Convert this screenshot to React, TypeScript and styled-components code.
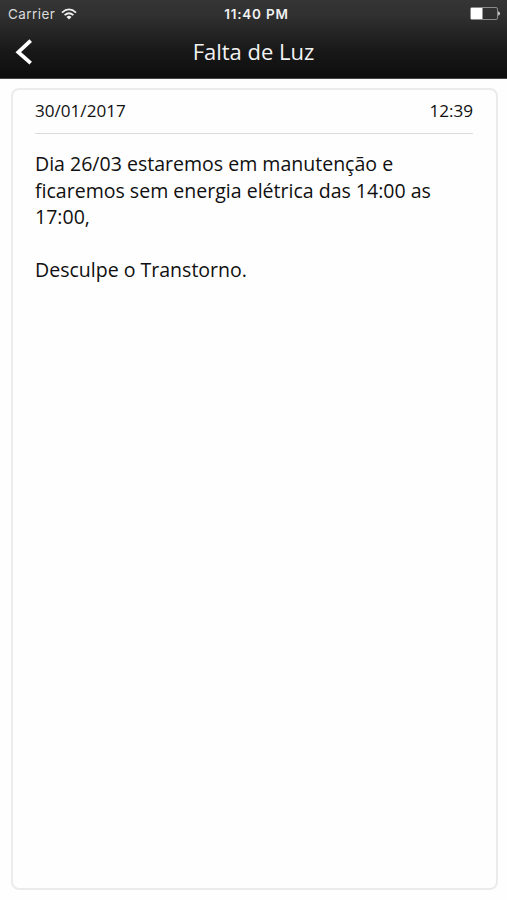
import React from "react";
import styled, { createGlobalStyle } from "styled-components";

const GlobalStyle = createGlobalStyle`
  * { box-sizing: border-box; }
  body { margin: 0; background: #fefefe; font-family: "Open Sans", "Noto Sans", sans-serif; }
`;

const Screen = styled.main`
  height: 900px;
  display: flex;
  flex-direction: column;
`;

const Header = styled.header`
  height: 79px;
  flex: none;
  background: linear-gradient(#353535 0%, #303030 20%, #181818 66%, #0e0e0e 100%);
  border-bottom: 1px solid #464646;
`;

const StatusBar = styled.div`
  height: 27px;
  padding: 0 7px 0 8px;
  display: grid;
  grid-template-columns: 1fr auto 1fr;
  align-items: center;
  font-family: Inter, "Liberation Sans", sans-serif;
  line-height: 27px;
  color: #dcdcdc;
`;

const Carrier = styled.div`
  display: flex;
  align-items: center;
  gap: 6px;
  font-size: 13.5px;
  letter-spacing: 0.45px;

  span { padding-top: 1px; line-height: 26px; }
`;

const Clock = styled.div`
  padding-top: 1px;
  line-height: 26px;
  font-weight: 600;
  font-size: 13.5px;
  letter-spacing: 0.8px;
  margin-left: 5px;
  color: #f0f0f0;
`;

const BatterySlot = styled.div`
  display: flex;
  justify-content: flex-end;
`;

const TitleBar = styled.div`
  height: 50px;
  padding: 0 15px;
  display: grid;
  grid-template-columns: 1fr auto 1fr;
  align-items: center;
`;

const BackButton = styled.button`
  justify-self: start;
  display: flex;
  padding: 0;
  border: 0;
  background: none;
`;

const Title = styled.h1`
  margin: 0;
  padding-bottom: 2px;
  font-size: 22px;
  font-weight: 400;
  line-height: 46px;
  color: #f2f2f2;
`;

const Card = styled.article`
  flex: 1;
  margin: 9px 9px 10px 11px;
  padding: 0 23px 0 22px;
  border: 2px solid #ebebeb;
  border-radius: 8px;
  color: #101010;
`;

const CardHeader = styled.div`
  height: 44px;
  display: flex;
  justify-content: space-between;
  border-bottom: 1px solid #dcdcdc;
  font-size: 17.1px;
  line-height: 42px;
`;

const Message = styled.p`
  margin: 17px 0 0;
  font-size: 19.55px;
  line-height: 26.6px;
  white-space: pre-line;
`;

const WifiIcon = () => (
  <svg width="16" height="12" viewBox="0 0 16 12" fill="none" stroke="#eeeeee" strokeWidth="1.8">
    <path d="M1 4.6Q8 -1.8 15 4.6M3.6 7.2Q8 3.2 12.4 7.2" />
    <path d="M5.5 8.9Q8 6.8 10.5 8.9L8 11.5Z" fill="#eeeeee" stroke="none" />
  </svg>
);

const BatteryIcon = () => (
  <svg width="30" height="13" viewBox="0 0 30 13">
    <rect x="0.5" y="0.5" width="27" height="12" rx="1.5" fill="none" stroke="#8b8b8b" />
    <path d="M1 1H12.5V12H1Z" fill="#ffffff" />
    <path d="M28.2 4.3Q30 5.2 30 6.5T28.2 8.7Z" fill="#dddddd" />
  </svg>
);

const ChevronIcon = () => (
  <svg width="18" height="26" viewBox="0 0 18 26" fill="none" stroke="#ffffff" strokeWidth="3.8">
    <path d="M15.7 1.6L3.3 13.2L15.7 24.2" />
  </svg>
);

export default function App() {
  return (
    <Screen>
      <GlobalStyle />
      <Header>
        <StatusBar>
          <Carrier>
            <span>Carrier</span>
            <WifiIcon />
          </Carrier>
          <Clock>11:40 PM</Clock>
          <BatterySlot>
            <BatteryIcon />
          </BatterySlot>
        </StatusBar>
        <TitleBar>
          <BackButton aria-label="Voltar">
            <ChevronIcon />
          </BackButton>
          <Title>Falta de Luz</Title>
        </TitleBar>
      </Header>
      <Card>
        <CardHeader>
          <time>30/01/2017</time>
          <time>12:39</time>
        </CardHeader>
        <Message>
          {"Dia 26/03 estaremos em manutenção e ficaremos sem energia elétrica das 14:00 as 17:00,\n\nDesculpe o Transtorno."}
        </Message>
      </Card>
    </Screen>
  );
}
